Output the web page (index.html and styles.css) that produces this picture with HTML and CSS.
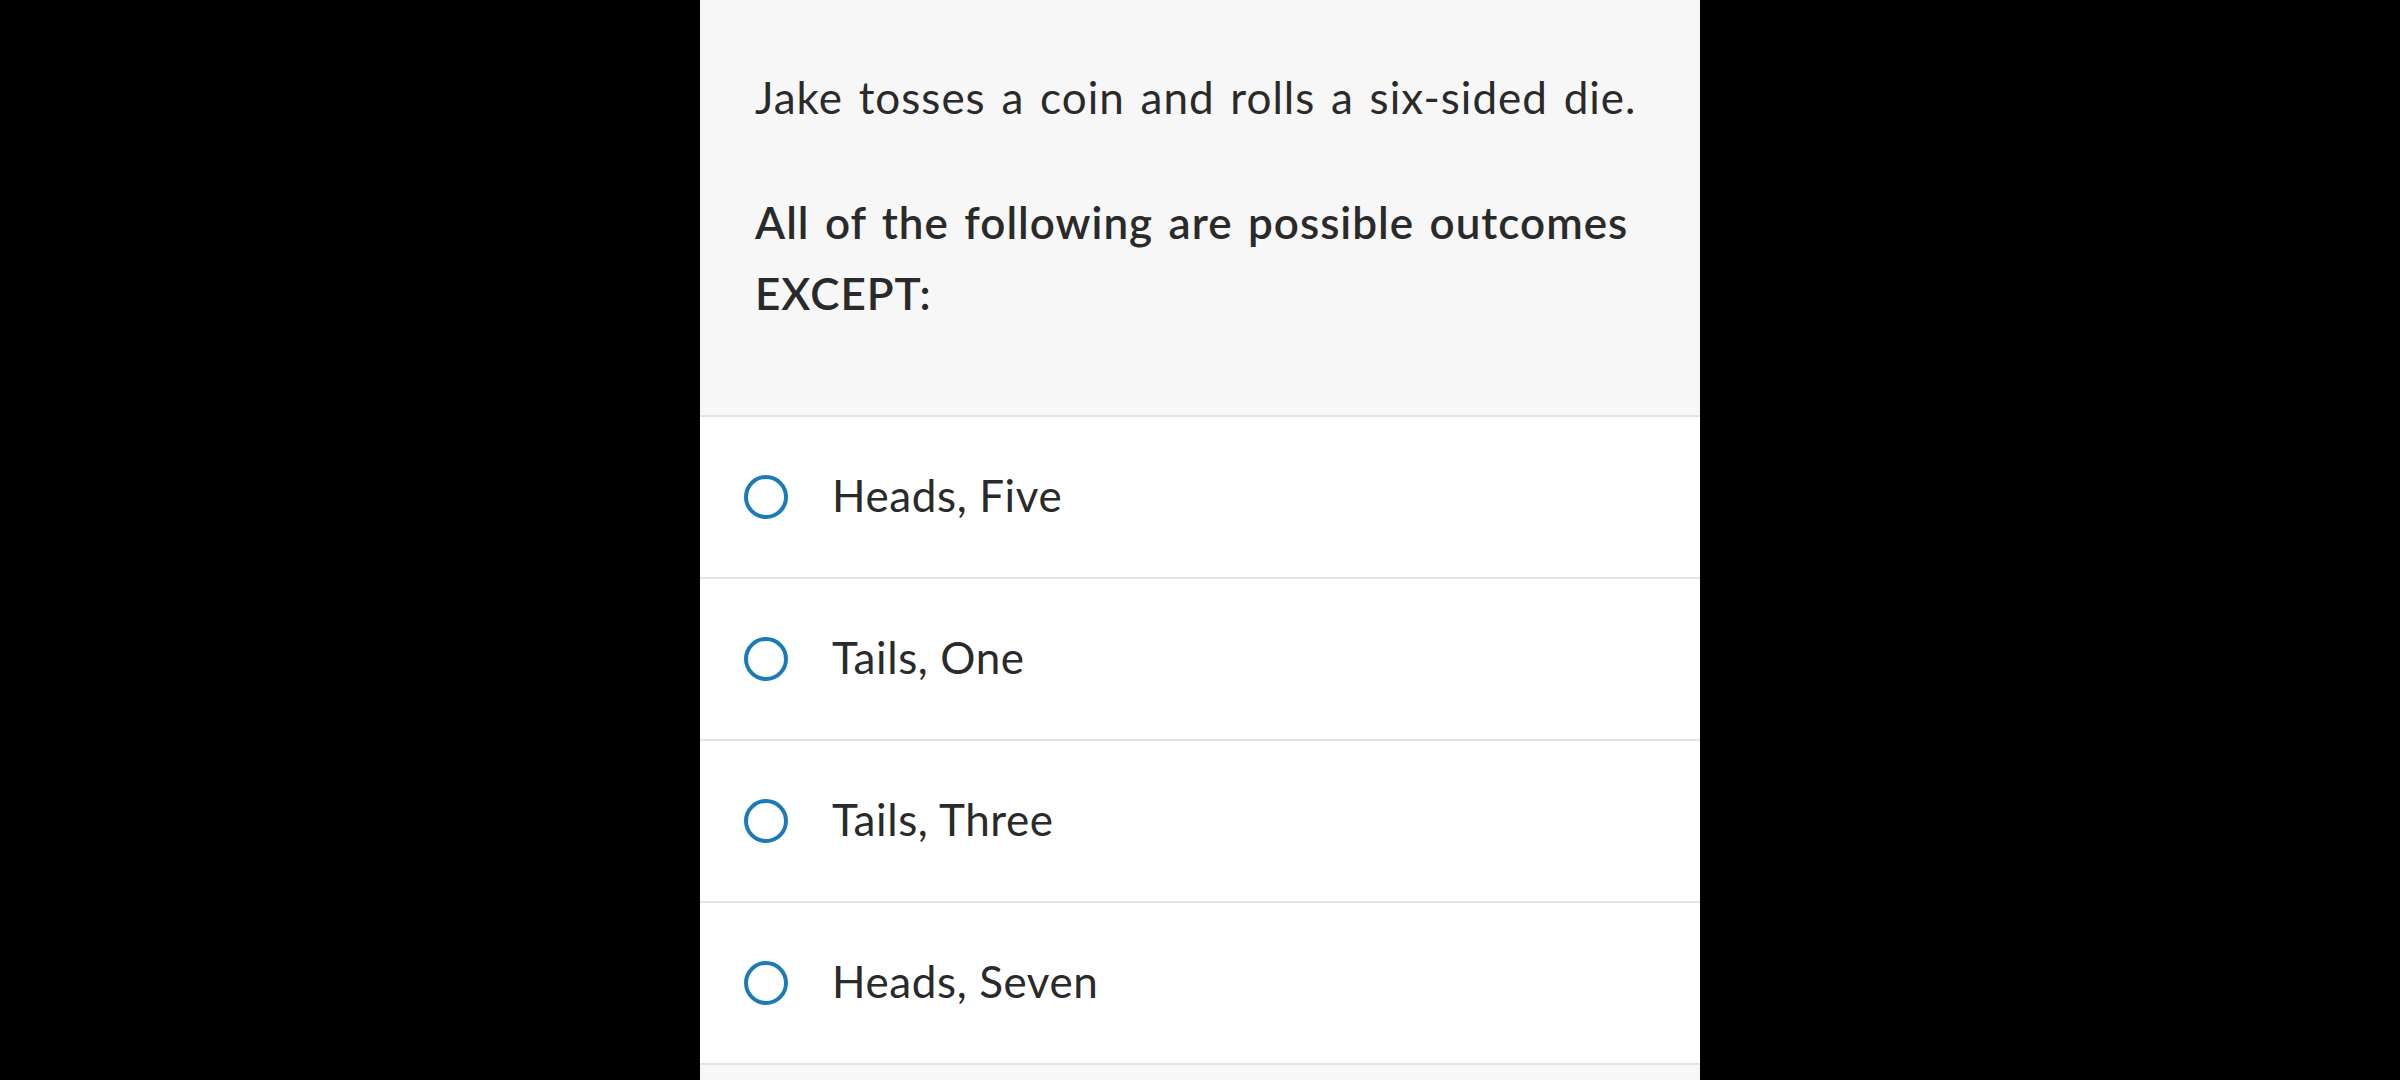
FILE: index.html
```html
<!DOCTYPE html>
<html lang="en">
<head>
<meta charset="utf-8">
<title>Question</title>
<link rel="stylesheet" href="styles.css">
</head>
<body>
<main class="panel">
  <section class="question">
    <p class="stem">Jake tosses a coin and rolls a six-sided die.</p>
    <p class="prompt">All of the following are possible outcomes EXCEPT:</p>
  </section>
  <ul class="options">
    <li class="option"><span class="radio"></span><span class="label">Heads, Five</span></li>
    <li class="option"><span class="radio"></span><span class="label">Tails, One</span></li>
    <li class="option"><span class="radio"></span><span class="label">Tails, Three</span></li>
    <li class="option"><span class="radio"></span><span class="label">Heads, Seven</span></li>
  </ul>
  <div class="footer"></div>
</main>
</body>
</html>
```
FILE: styles.css
```css
html, body {
  margin: 0;
  padding: 0;
  height: 100%;
  background: #000;
}
body {
  display: flex;
  justify-content: center;
  font-family: "Lato", "Open Sans", sans-serif;
  color: #2a2a2a;
  overflow: hidden;
}
.panel {
  width: 1000px;
  height: 1080px;
  background: #f7f7f7;
  display: flex;
  flex-direction: column;
}
.question {
  background: #f7f7f7;
  padding: 62px 50px 86px 55px;
  border-bottom: 2px solid #e3e3e3;
}
.question p {
  margin: 0;
  font-size: 44px;
  line-height: 71px;
  letter-spacing: 1px;
  word-spacing: 3.5px;
}
.stem {
  font-weight: 400;
}
.prompt {
  font-weight: 600;
  margin-top: 54px !important;
}
.options {
  list-style: none;
  margin: 0;
  padding: 0;
  background: #fff;
}
.option {
  height: 160px;
  border-bottom: 2px solid #e3e3e3;
  display: flex;
  align-items: center;
  padding-left: 44px;
}
.radio {
  width: 36px;
  height: 36px;
  border: 4px solid #1b7bb8;
  border-radius: 50%;
  flex: none;
}
.label {
  margin-left: 44px;
  font-size: 44px;
  letter-spacing: 0.6px;
  padding-bottom: 5px;
}
.footer {
  flex: 1;
  background: #f7f7f7;
}
```
